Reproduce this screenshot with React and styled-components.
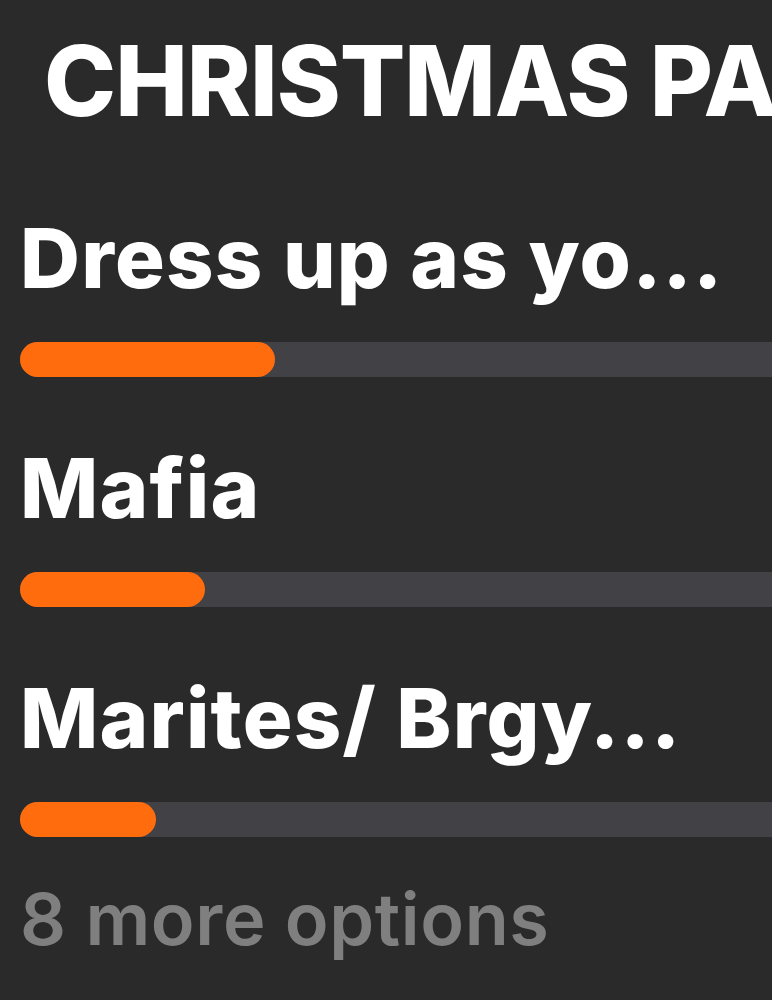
import React from "react";
import styled, { createGlobalStyle } from "styled-components";

const Global = createGlobalStyle`
  html, body {
    margin: 0;
    padding: 0;
    background: #2a2a2a;
    overflow: hidden;
  }
  body {
    font-family: Inter, "Noto Sans", "Liberation Sans", sans-serif;
    -webkit-font-smoothing: antialiased;
  }
`;

const Page = styled.div`
  width: 772px;
  height: 1000px;
  overflow: hidden;
  background: #2a2a2a;
`;

const Card = styled.section`
  width: 960px;
  padding: 32px 0 0 20px;
  display: flex;
  flex-direction: column;
`;

const Title = styled.h1`
  margin: 0 0 88px 24px;
  font-size: 97px;
  line-height: 97px;
  font-weight: 800;
  letter-spacing: -1px;
  color: #ffffff;
  white-space: nowrap;
`;

const Options = styled.div`
  display: flex;
  flex-direction: column;
  gap: 70px;
`;

const Option = styled.div`
  display: flex;
  flex-direction: column;
  gap: 43px;
`;

const Label = styled.div`
  font-size: 83px;
  line-height: 82px;
  font-weight: 800;
  letter-spacing: 1.2px;
  color: #ffffff;
  white-space: nowrap;
`;

const Track = styled.div`
  height: 35px;
  border-radius: 18px;
  background: #414146;
  display: flex;
`;

const Fill = styled.div`
  height: 100%;
  border-radius: 18px;
  background: #ff6c0e;
`;

const More = styled.div`
  margin-top: 46px;
  font-size: 72px;
  line-height: 72px;
  font-weight: 600;
  letter-spacing: 0.6px;
  color: #7f7f7f;
  white-space: nowrap;
`;

const options = [
  { label: "Dress up as yo...", width: 255 },
  { label: "Mafia", width: 185 },
  { label: "Marites/ Brgy...", width: 136 },
];

export default function App() {
  return (
    <Page>
      <Global />
      <Card>
        <Title>CHRISTMAS PARTY THEME</Title>
        <Options>
          {options.map((o) => (
            <Option key={o.label}>
              <Label>{o.label}</Label>
              <Track>
                <Fill style={{ width: o.width }} />
              </Track>
            </Option>
          ))}
        </Options>
        <More>8 more options</More>
      </Card>
    </Page>
  );
}
